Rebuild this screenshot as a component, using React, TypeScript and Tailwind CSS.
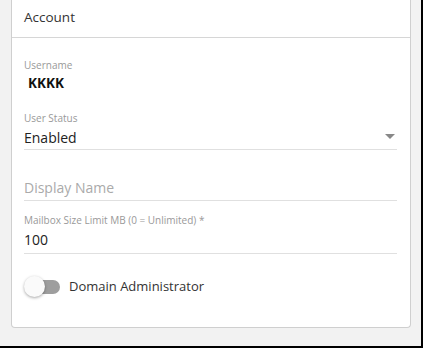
export default function App() {
  return (
    <div
      className="w-[423px] h-[348px] bg-[#f2f2f2] border-r-2 border-b-2 border-black overflow-hidden"
      style={{ fontFamily: '"Open Sans", "Noto Sans", sans-serif' }}
    >
      <div className="ml-[11px] w-[400px] h-[328px] bg-white border border-t-0 border-[#cfcfcf] rounded-b-[4px]">
        {/* header */}
        <div className="h-[38px] border-b border-[#d6d6d6] pl-[12px] flex items-center">
          <span className="text-[13.5px] text-[#333] -mt-[3px]">Account</span>
        </div>

        <div className="pl-[12px] pr-[13px]">
          {/* username */}
          <div className="pt-[21px]">
            <div className="text-[10px] leading-[12px] text-[#999]">Username</div>
            <div className="text-[13.5px] leading-[18px] font-bold text-[#111] pl-[4px] mt-[3px]">KKKK</div>
          </div>

          {/* user status */}
          <div className="mt-[20px]">
            <div className="text-[10px] leading-[12px] text-[#999]">User Status</div>
            <div className="flex items-center justify-between border-b border-[#e0e0e0] h-[25px] mt-[1px]">
              <span className="text-[14px] text-[#222]">Enabled</span>
              <span className="w-0 h-0 border-l-[5px] border-r-[5px] border-t-[5px] border-l-transparent border-r-transparent border-t-[#888] mr-[2px] -mt-[2px]" />
            </div>
          </div>

          {/* display name */}
          <div className="mt-[26px] border-b border-[#e0e0e0] h-[25px] flex items-center">
            <span className="text-[14px] text-[#aaa] -mt-[1px]">Display Name</span>
          </div>

          {/* mailbox size */}
          <div className="mt-[13px]">
            <div className="text-[10px] leading-[12px] text-[#999]">Mailbox Size Limit MB (0 = Unlimited) *</div>
            <div className="border-b border-[#e0e0e0] h-[27px] mt-[1px] flex items-center">
              <span className="text-[14px] text-[#222] -mt-[2px]">100</span>
            </div>
          </div>

          {/* toggle */}
          <div className="mt-[22px] flex items-center">
            <div className="relative w-[36px] h-[22px] flex items-center">
              <div className="ml-[6px] w-[30px] h-[14px] rounded-full bg-[#9e9e9e]" />
              <div className="absolute left-0 top-0 w-[21px] h-[21px] rounded-full bg-[#fafafa] shadow-[0_1px_3px_rgba(0,0,0,0.35)]" />
            </div>
            <span className="ml-[9px] text-[13px] text-[#333]">Domain Administrator</span>
          </div>
        </div>
      </div>
    </div>
  )
}
